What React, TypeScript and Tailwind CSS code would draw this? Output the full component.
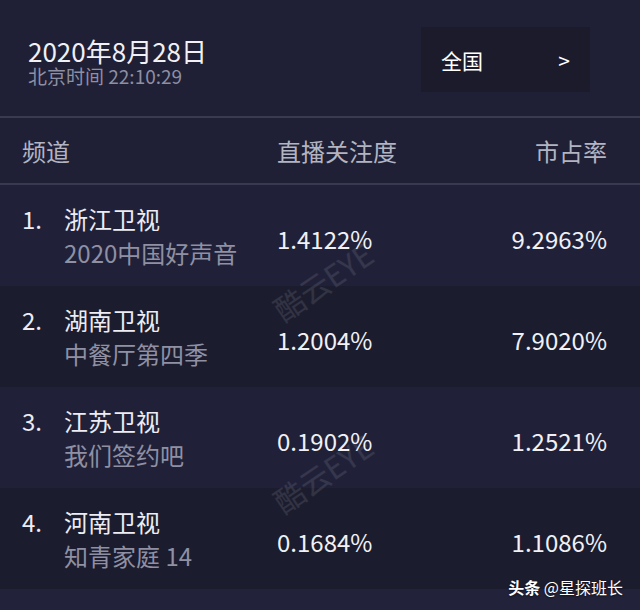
import React from 'react';

const font = "font-['Noto_Sans_CJK_SC','Noto_Sans',sans-serif]";

const rows = [
  { rank: '1.', name: '浙江卫视', show: '2020中国好声音', focus: '1.4122%', share: '9.2963%', light: true },
  { rank: '2.', name: '湖南卫视', show: '中餐厅第四季', focus: '1.2004%', share: '7.9020%', light: false },
  { rank: '3.', name: '江苏卫视', show: '我们签约吧', focus: '0.1902%', share: '1.2521%', light: true },
  { rank: '4.', name: '河南卫视', show: '知青家庭 14', focus: '0.1684%', share: '1.1086%', light: false },
];

// faint diagonal watermark laid over the table
const Watermark: React.FC<{ top: number }> = ({ top }) => (
  <div
    className="absolute left-[267px] text-[30px] leading-none text-white/10 -rotate-[34deg] pointer-events-none select-none"
    style={{ top }}
  >
    酷云EYE
  </div>
);

const App: React.FC = () => {
  return (
    <div className={`${font} relative w-[640px] h-[610px] overflow-hidden bg-[#1f2035] flex flex-col`}>
      {/* top bar */}
      <div className="h-[118px] shrink-0 flex justify-between border-b-2 border-[#383a52]">
        <div className="pl-[28px] pt-[37px] flex flex-col">
          <span className="text-[26px] leading-[28px] text-[#f1f1f5]">2020年8月28日</span>
          <span className="mt-[1px] text-[19px] leading-[20px] text-[#8e8fa3]">北京时间 22:10:29</span>
        </div>
        <div className="mt-[27px] mr-[50px] w-[169px] h-[65px] bg-[#1b1b2c] flex items-center justify-between pl-[20px] pr-[20px]">
          <span className="text-[21px] text-white pt-[3px]">全国</span>
          <span className="text-[21px] text-white pt-[2px]">&gt;</span>
        </div>
      </div>

      {/* column heads */}
      <div className="h-[67px] shrink-0 flex items-center pl-[22px] pr-[33px] border-b-2 border-[#383a52] text-[24px] text-[#b3b4c2]">
        <span className="w-[255px]">频道</span>
        <span className="flex-1">直播关注度</span>
        <span>市占率</span>
      </div>

      {rows.map((r) => (
        <div
          key={r.rank}
          className={`h-[101px] shrink-0 flex items-center pl-[22px] pr-[33px] ${r.light ? 'bg-[#202139]' : 'bg-[#1b1c2e]'}`}
        >
          <div className="w-[255px] flex">
            <span className="w-[42px] text-[24px] leading-[34px] text-[#ececf2]">{r.rank}</span>
            <div className="flex flex-col">
              <span className="text-[24px] leading-[34px] text-[#ececf2]">{r.name}</span>
              <span className="text-[24px] leading-[34px] text-[#8f90a3]">{r.show}</span>
            </div>
          </div>
          <span className="flex-1 text-[24px] text-[#f1f1f5] pt-[6px]">{r.focus}</span>
          <span className="text-[24px] text-[#f1f1f5] pt-[6px]">{r.share}</span>
        </div>
      ))}

      <div className="flex-1 bg-[#22233a]" />

      <Watermark top={266} />
      <Watermark top={458} />

      <div className="absolute right-[17px] top-[576px] text-[16px] leading-[22px] text-white [text-shadow:0_1px_2px_rgba(0,0,0,0.6)]">
        <span className="font-bold">头条</span> @星探班长
      </div>
    </div>
  );
};

export default App;
